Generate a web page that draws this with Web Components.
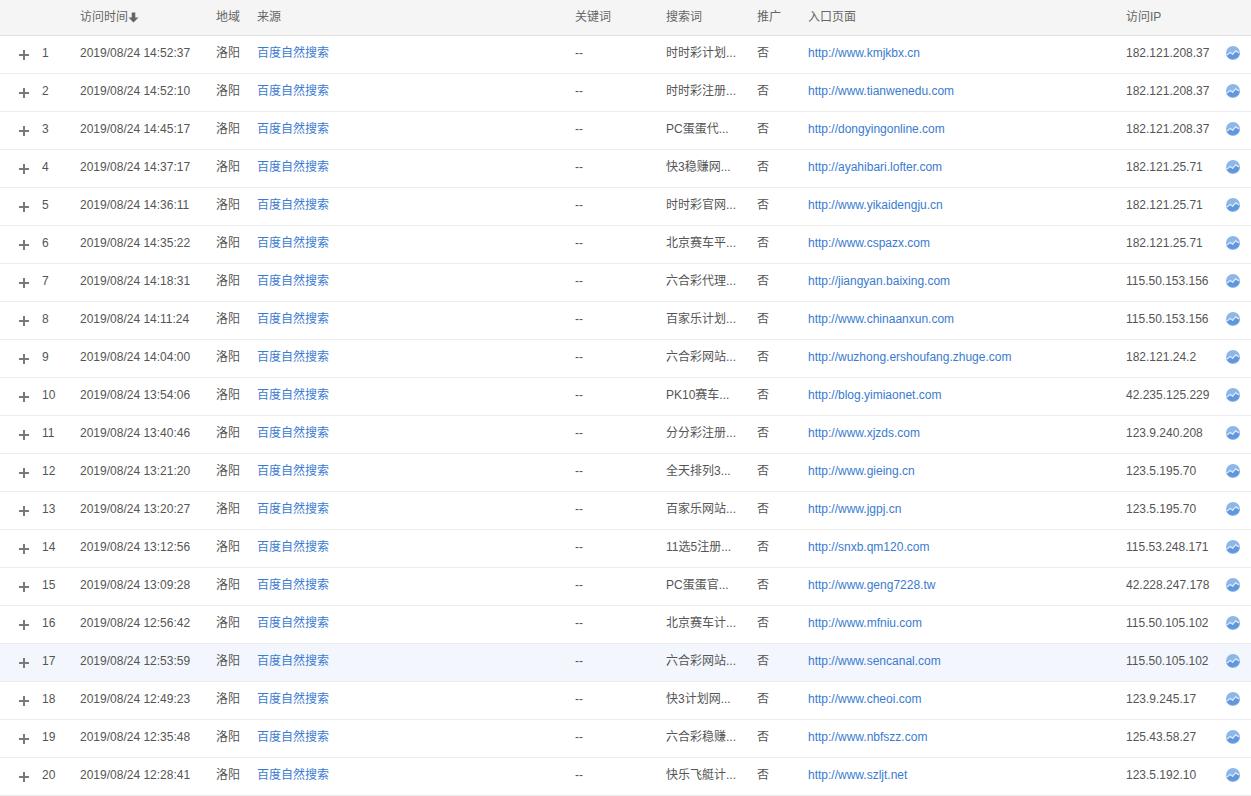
<!DOCTYPE html>
<html lang="zh">
<head>
<meta charset="utf-8">
<title>访问明细</title>
<style>
html,body{margin:0;padding:0;height:796px;overflow:hidden;background:#fff}
body{font:12px "Liberation Sans","Noto Sans CJK SC",sans-serif;color:#666}
</style>
</head>
<body>
<visit-table></visit-table>
<script>
const GRID='display:grid;grid-template-columns:42px 38px 136px 41px 318px 91px 91px 51px 318px 100px 25px;align-items:stretch;';

class PlusIcon extends HTMLElement{
  constructor(){super();this.attachShadow({mode:'open'}).innerHTML=`<style>:host{display:block;width:10px;height:10px}svg{display:block}</style>
  <svg width="10" height="10" viewBox="0 0 10 10"><path d="M0 5H10M5 0V10" stroke="#7a7a7a" stroke-width="2" fill="none"/></svg>`;}
}
class TrendIcon extends HTMLElement{
  constructor(){super();this.attachShadow({mode:'open'}).innerHTML=`<style>:host{display:block;width:14px;height:14px}svg{display:block}</style>
  <svg width="14" height="14" viewBox="0 0 14 14"><circle cx="7" cy="7" r="7" fill="#8db6e9"/>
  <path d="M0.7 9.4 4.2 6.4 6.6 8.4 9.6 4.8 13.6 7.4A7 7 0 0 1 .7 9.4Z" fill="#5f97dd"/>
  <path d="M1 9.2 4.2 6.4 6.6 8.4 9.6 4.8 13 7" fill="none" stroke="#e6f0fb" stroke-width="1.1" stroke-linejoin="round"/></svg>`;}
}
class SortArrow extends HTMLElement{
  constructor(){super();this.attachShadow({mode:'open'}).innerHTML=`<style>:host{display:inline-block;width:11px;height:11px;vertical-align:-2px}svg{display:block}</style>
  <svg width="11" height="11" viewBox="0 0 11 11"><path d="M3.7 0.5H7.3V5.5H10.5L5.5 10.5 0.5 5.5H3.7Z" fill="#666"/></svg>`;}
}
class VisitHeader extends HTMLElement{
  constructor(){super();this.attachShadow({mode:'open'}).innerHTML=`<style>
  :host{${GRID}height:35px;background:#f5f5f5;border-bottom:1px solid #e2e2e2;line-height:35px;color:#666;white-space:nowrap}
  </style>
  <span></span><span></span><span>访问时间<sort-arrow></sort-arrow></span><span>地域</span><span>来源</span><span>关键词</span><span>搜索词</span><span>推广</span><span>入口页面</span><span>访问IP</span><span></span>`;}
}
class VisitRow extends HTMLElement{
  connectedCallback(){
    const a=n=>this.getAttribute(n)||'';
    this.attachShadow({mode:'open'}).innerHTML=`<style>
    :host{${GRID}height:37px;border-bottom:1px solid #ececec;line-height:34px;color:#555;white-space:nowrap}
    :host([hot]){background:#f3f7fd}
    .plus{display:flex;justify-content:flex-end;padding:14px 13px 0 0;box-sizing:border-box}
    a{color:#3a7bd0;text-decoration:none}
    .trend{padding-top:10px;box-sizing:border-box}
    </style>
    <span class="plus"><plus-icon></plus-icon></span>
    <span>${a('n')}</span><span>${a('time')}</span><span>洛阳</span>
    <span><a href="#">百度自然搜索</a></span><span>--</span>
    <span>${a('term')}</span><span>否</span>
    <span><a href="#">${a('url')}</a></span><span>${a('ip')}</span>
    <span class="trend"><trend-icon></trend-icon></span>`;
  }
}
const DATA=[
['14:52:37','时时彩计划...','http://www.kmjkbx.cn','182.121.208.37'],
['14:52:10','时时彩注册...','http://www.tianwenedu.com','182.121.208.37'],
['14:45:17','PC蛋蛋代...','http://dongyingonline.com','182.121.208.37'],
['14:37:17','快3稳赚网...','http://ayahibari.lofter.com','182.121.25.71'],
['14:36:11','时时彩官网...','http://www.yikaidengju.cn','182.121.25.71'],
['14:35:22','北京赛车平...','http://www.cspazx.com','182.121.25.71'],
['14:18:31','六合彩代理...','http://jiangyan.baixing.com','115.50.153.156'],
['14:11:24','百家乐计划...','http://www.chinaanxun.com','115.50.153.156'],
['14:04:00','六合彩网站...','http://wuzhong.ershoufang.zhuge.com','182.121.24.2'],
['13:54:06','PK10赛车...','http://blog.yimiaonet.com','42.235.125.229'],
['13:40:46','分分彩注册...','http://www.xjzds.com','123.9.240.208'],
['13:21:20','全天排列3...','http://www.gieing.cn','123.5.195.70'],
['13:20:27','百家乐网站...','http://www.jgpj.cn','123.5.195.70'],
['13:12:56','11选5注册...','http://snxb.qm120.com','115.53.248.171'],
['13:09:28','PC蛋蛋官...','http://www.geng7228.tw','42.228.247.178'],
['12:56:42','北京赛车计...','http://www.mfniu.com','115.50.105.102'],
['12:53:59','六合彩网站...','http://www.sencanal.com','115.50.105.102'],
['12:49:23','快3计划网...','http://www.cheoi.com','123.9.245.17'],
['12:35:48','六合彩稳赚...','http://www.nbfszz.com','125.43.58.27'],
['12:28:41','快乐飞艇计...','http://www.szljt.net','123.5.192.10']];
class VisitTable extends HTMLElement{
  connectedCallback(){
    const s=this.attachShadow({mode:'open'});
    s.innerHTML=`<style>:host{display:block;width:1251px}</style><visit-header></visit-header>`+
    DATA.map((d,i)=>`<visit-row n="${i+1}" time="2019/08/24 ${d[0]}" term="${d[1]}" url="${d[2]}" ip="${d[3]}"${i===16?' hot':''}></visit-row>`).join('');
  }
}
customElements.define('plus-icon',PlusIcon);
customElements.define('trend-icon',TrendIcon);
customElements.define('sort-arrow',SortArrow);
customElements.define('visit-header',VisitHeader);
customElements.define('visit-row',VisitRow);
customElements.define('visit-table',VisitTable);
</script>
</body>
</html>
